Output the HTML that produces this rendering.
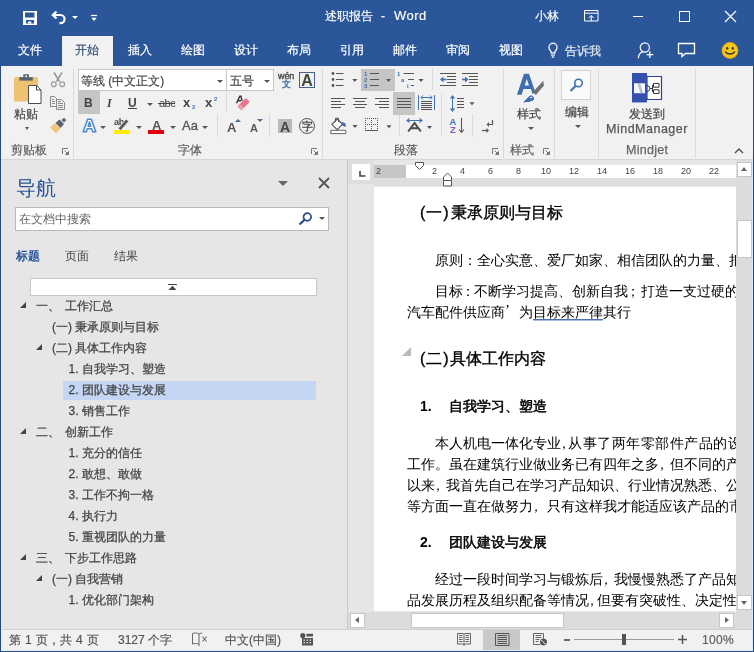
<!DOCTYPE html>
<html><head><meta charset="utf-8">
<style>
*{box-sizing:border-box;margin:0;padding:0}
html,body{width:754px;height:652px;overflow:hidden;-webkit-font-smoothing:antialiased;background:#2b579a;font-family:"Liberation Sans",sans-serif;color:#444;position:relative}
.a{position:absolute;will-change:transform}
svg{position:absolute;overflow:visible}
.w{color:#fff;font-size:12px;line-height:14px;white-space:nowrap;-webkit-text-stroke:0.15px #fff}
.tab{color:#fff;font-size:12px;line-height:14px;top:43px;white-space:nowrap;-webkit-text-stroke:0.2px currentColor}
.t{font-size:12px;line-height:14px;white-space:nowrap;color:#444;-webkit-text-stroke:0.2px #444}
.gl{font-size:12px;line-height:14px;white-space:nowrap;color:#5e5e5e;-webkit-text-stroke:0.2px #5e5e5e;margin-top:0.5px}
.sep{position:absolute;width:1px;background:#dadada}
.dd{position:absolute;width:0;height:0;border-left:3px solid transparent;border-right:3px solid transparent;border-top:3.5px solid #555;margin-left:-0.5px}
.nv{position:absolute;font-size:12px;line-height:14px;white-space:nowrap;color:#444;-webkit-text-stroke:0.25px #444}
.tri{position:absolute;width:0;height:0;border-left:6px solid transparent;border-bottom:6px solid #444}
.rn{position:absolute;font-size:9px;line-height:10px;color:#444;white-space:nowrap}
.d{position:absolute;font-size:14px;line-height:16px;white-space:nowrap;color:#000}
.hd{font-size:16px;line-height:18px;-webkit-text-stroke:0.35px #000}
</style></head><body>
<!-- ============ TITLE BAR ============ -->
<div class="a" style="left:0;top:0;width:754px;height:66px;background:#2b579a">
  <!-- save -->
  <svg style="left:23px;top:11px" width="14" height="14" viewBox="0 0 14 14">
    <path d="M0 0h14v14H0z" fill="#fff"/>
    <path d="M2 1.5h9.5v5H2zM3 9h8v3.5H3z" fill="#2b579a"/>
    <path d="M5 10.5h3.3v2H5z" fill="#fff"/>
  </svg>
  <!-- undo -->
  <svg style="left:51px;top:11px" width="16" height="14" viewBox="0 0 16 14">
    <path d="M2 4h7.5a4.1 4.1 0 0 1 0 8.2H8.5" fill="none" stroke="#fff" stroke-width="2.2"/>
    <path d="M5.5 .5L1.8 4l3.7 3.5" fill="none" stroke="#fff" stroke-width="2.2"/>
  </svg>
  <div class="dd" style="left:72px;top:16px;border-top-color:#fff;border-left-width:3px;border-right-width:3px"></div>
  <svg style="left:90px;top:14px" width="8" height="8" viewBox="0 0 8 8">
    <path d="M1 1.5h6" stroke="#fff" stroke-width="1.2"/>
    <path d="M1.3 3.8h5.4L4 7z" fill="#fff"/>
  </svg>
  <div class="a w" style="left:325px;top:9px">述职报告</div>
  <div class="a w" style="left:381px;top:9px">-</div>
  <div class="a w" style="left:394px;top:9px;font-size:13px;letter-spacing:0.5px">Word</div>
  <div class="a w" style="left:535px;top:9px">小林</div>
  <svg style="left:584px;top:10px" width="15" height="12" viewBox="0 0 15 12">
    <path d="M.5 .5h13.5v10.5H.5z" fill="none" stroke="#fff" stroke-width="1"/>
    <path d="M.5 3.2h13.5" stroke="#fff" stroke-width="1"/>
    <path d="M7.3 11V5.5M4.8 8l2.5-2.5L9.8 8" fill="none" stroke="#fff" stroke-width="1"/>
  </svg>
  <div class="a" style="left:633px;top:16px;width:10px;height:1px;background:#fff"></div>
  <div class="a" style="left:679px;top:11px;width:11px;height:11px;border:1px solid #fff"></div>
  <svg style="left:724px;top:10px" width="13" height="13" viewBox="0 0 13 13">
    <path d="M1 1l11 11M12 1L1 12" stroke="#fff" stroke-width="1.2"/>
  </svg>
  <!-- tabs -->
  <div class="a tab" style="left:18px">文件</div>
  <div class="a" style="left:62px;top:36px;width:51px;height:30px;background:#f1f1f1"></div>
  <div class="a tab" style="left:75px;color:#364f78">开始</div>
  <div class="a tab" style="left:128px">插入</div>
  <div class="a tab" style="left:181px">绘图</div>
  <div class="a tab" style="left:234px">设计</div>
  <div class="a tab" style="left:287px">布局</div>
  <div class="a tab" style="left:340px">引用</div>
  <div class="a tab" style="left:393px">邮件</div>
  <div class="a tab" style="left:446px">审阅</div>
  <div class="a tab" style="left:499px">视图</div>
  <svg style="left:548px;top:42px" width="10" height="16" viewBox="0 0 10 16">
    <path d="M3.2 11v-1.3C1.6 8.5 1 7.2 1 5.3a4 4 0 0 1 8 0c0 1.9-.6 3.2-2.2 4.4V11z" fill="none" stroke="#e8edf5" stroke-width="1.4"/>
    <path d="M3 13.2h4M3.8 15h2.4" stroke="#e8edf5" stroke-width="1.3"/>
  </svg>
  <div class="a tab" style="left:565px;top:43.5px;color:#dfe6f0">告诉我</div>
  <svg style="left:637px;top:42px" width="18" height="17" viewBox="0 0 18 17">
    <circle cx="7.8" cy="5.5" r="4.6" fill="none" stroke="#fff" stroke-width="1.2"/>
    <path d="M1.3 16.3c.3-3.5 2-5.8 4.8-6.6" fill="none" stroke="#fff" stroke-width="1.2"/>
    <path d="M12.8 9.2v6.8M9.5 12.6h6.8" stroke="#fff" stroke-width="1.3"/>
  </svg>
  <svg style="left:677px;top:42px" width="19" height="16" viewBox="0 0 19 16">
    <path d="M1.5 1.5h16v10h-9l-3.5 3v-3h-3.5z" fill="none" stroke="#fff" stroke-width="1.3"/>
  </svg>
  <svg style="left:721px;top:42px" width="18" height="17" viewBox="0 0 18 17">
    <circle cx="9" cy="8.5" r="8.2" fill="#f7c51c"/>
    <circle cx="9" cy="8.5" r="7.8" fill="none" stroke="#e0a800" stroke-width=".6"/>
    <ellipse cx="6.2" cy="6.2" rx="1.1" ry="1.5" fill="#3a3a3a"/>
    <ellipse cx="11.8" cy="6.2" rx="1.1" ry="1.5" fill="#3a3a3a"/>
    <path d="M4.3 9.5c1.5 3.3 7.9 3.3 9.4 0" fill="none" stroke="#3a3a3a" stroke-width="1.4"/>
  </svg>
</div>

<!-- ============ RIBBON ============ -->
<div class="a" style="left:1px;top:66px;width:752px;height:94px;background:#f1f1f1;border-bottom:1px solid #d6d6d6"></div>
<div id="rib">
  <!-- clipboard group -->
  <svg style="left:13px;top:73px" width="31" height="32" viewBox="0 0 31 32">
    <path d="M1 6a2 2 0 0 1 2-2h20a2 2 0 0 1 2 2v22.5H1z" fill="#efc173"/>
    <path d="M6.3 4.2h13.5v3.4H6.3z" fill="#56616b"/>
    <path d="M10.3 1.2h5.6v3.2h-5.6z" fill="#56616b"/>
    <circle cx="13.1" cy="3.3" r="1" fill="#f1f1f1"/>
    <path d="M15.5 12.5h8l4.5 4.5v13.5h-12.5z" fill="#fff" stroke="#4d4d4d" stroke-width="1"/>
    <path d="M23.5 12.5v4.5h4.5" fill="none" stroke="#4d4d4d" stroke-width="1"/>
  </svg>
  <div class="a t" style="left:14px;top:107px">粘贴</div>
  <div class="dd" style="left:25.5px;top:126.5px;border-left-width:2.5px;border-right-width:2.5px;border-top-width:3px"></div>
  <svg style="left:50px;top:71px" width="16" height="17" viewBox="0 0 16 17">
    <path d="M4 1.5l5.5 9M12 1.5L6.5 10.5" stroke="#9a9a9a" stroke-width="1.6" fill="none"/>
    <circle cx="3.8" cy="13.3" r="2.4" fill="none" stroke="#9a9a9a" stroke-width="1.2"/>
    <circle cx="12.2" cy="13.3" r="2.4" fill="none" stroke="#9a9a9a" stroke-width="1.2"/>
  </svg>
  <svg style="left:50px;top:95px" width="16" height="16" viewBox="0 0 16 16">
    <path d="M.5 1.5h4l2 2v8h-6z" fill="none" stroke="#8a8a8a" stroke-width="1"/>
    <path d="M6.5 4.5h5l3 3v7h-8z" fill="#f1f1f1" stroke="#8a8a8a" stroke-width="1"/>
    <path d="M2 4.5h2M2 6.5h3M2 8.5h3M8 8.5h5M8 10.5h5M8 12.5h5M8 6.5h3" stroke="#8a8a8a" stroke-width="1"/>
  </svg>
  <svg style="left:50px;top:117px" width="17" height="17" viewBox="0 0 17 17">
    <path d="M0 10.5l5-4.5 5.5 5.5-4.5 5z" fill="#f0c67a"/>
    <path d="M5.5 6l4-3.5 4.5 4.5-3.5 4z" fill="#5a6470"/>
    <path d="M11.5 3l2.5-2.3 2.3 2.3-2.3 2.5z" fill="#5a6470"/>
  </svg>
  <div class="a gl" style="left:11px;top:142px">剪贴板</div>
  <svg style="left:62px;top:148px" width="7" height="7" viewBox="0 0 7 7">
    <path d="M.5 6V.5H6" fill="none" stroke="#777" stroke-width="1"/>
    <path d="M2.5 2.5l4 4M6.5 3.5v3h-3z" stroke="#777" stroke-width="1" fill="#777"/>
  </svg>
  <div class="sep" style="left:73px;top:69px;height:89px"></div>

  <!-- font group -->
  <div class="a" style="left:78px;top:69px;width:149px;height:22px;background:#fff;border:1px solid #c6c6c6"></div>
  <div class="a t" style="left:80.5px;top:74px">等线 (中文正文)</div>
  <div class="dd" style="left:217px;top:79.5px"></div>
  <div class="a" style="left:226px;top:69px;width:48px;height:22px;background:#fff;border:1px solid #c6c6c6"></div>
  <div class="a t" style="left:229.5px;top:74px">五号</div>
  <div class="dd" style="left:264px;top:79.5px"></div>
  <div class="a" style="left:278px;top:70.5px;font-size:9px;line-height:10px;color:#444;letter-spacing:-0.1px;-webkit-text-stroke:0.35px #444">wén</div>
  <div class="a" style="left:281.5px;top:79px;font-size:8.5px;line-height:10px;color:#4a6fa0;-webkit-text-stroke:0.4px #4a6fa0">文</div>
  <div class="a" style="left:299px;top:72px;width:16px;height:16px;border:1px solid #46628c"></div>
  <div class="a" style="left:299px;top:71.5px;font-size:16px;line-height:17px;color:#444;width:16px;text-align:center;font-weight:bold">A</div>

  <div class="a" style="left:78px;top:91px;width:22px;height:23px;background:#c5c5c5"></div>
  <div class="a" style="left:84px;top:96px;font-size:12px;line-height:14px;color:#444;font-weight:bold">B</div>
  <div class="a" style="left:107px;top:96px;font-size:12px;line-height:14px;color:#444;font-style:italic;font-family:'Liberation Serif',serif;font-weight:bold">I</div>
  <div class="a" style="left:128px;top:95.5px;font-size:12px;line-height:14px;color:#444;font-weight:bold">U</div>
  <div class="a" style="left:128px;top:108px;width:9px;height:1px;background:#444"></div>
  <div class="dd" style="left:147px;top:102.5px"></div>
  <div class="a" style="left:158.5px;top:97px;font-size:11px;line-height:12px;color:#444;letter-spacing:-0.5px">abc</div>
  <div class="a" style="left:158px;top:103px;width:17px;height:1px;background:#444"></div>
  <div class="a" style="left:183px;top:97px;font-size:13px;line-height:12px;color:#444;font-weight:bold">x</div>
  <div class="a" style="left:191.5px;top:104px;font-size:6px;line-height:6px;color:#3f73b5;font-weight:bold">2</div>
  <div class="a" style="left:205px;top:97px;font-size:13px;line-height:12px;color:#444;font-weight:bold">x</div>
  <div class="a" style="left:213.5px;top:96px;font-size:6px;line-height:6px;color:#3f73b5;font-weight:bold">2</div>
  <div class="sep" style="left:226px;top:92px;height:20px"></div>
  <svg style="left:235px;top:95px" width="16" height="16" viewBox="0 0 16 16">
    <path d="M1.5 8.3L4.8 1.3h1.2l1 4.5M3 5.8h3" fill="none" stroke="#3a3a3a" stroke-width="1.5"/>
    <g transform="translate(8.6 9.2) rotate(-45)">
      <rect x="-6" y="-2.8" width="12" height="5.6" rx="1.2" fill="#ec738c"/>
      <rect x="-6" y="-2.8" width="3.5" height="5.6" rx="1" fill="#e9a2b4"/>
    </g>
  </svg>

  <svg style="left:82px;top:118px" width="15" height="15" viewBox="0 0 15 15">
    <path d="M1.3 13.7L5.8 1.3h3.4l4.5 12.4h-2.9l-1-3H5.2l-1 3zM6 8.3h3L7.5 3.8z" fill="#fff" stroke="#b9d3ee" stroke-width="2.6" stroke-linejoin="round"/>
    <path d="M1.3 13.7L5.8 1.3h3.4l4.5 12.4h-2.9l-1-3H5.2l-1 3zM6 8.3h3L7.5 3.8z" fill="#fff" stroke="#4a86c5" stroke-width="1.3" stroke-linejoin="round"/>
  </svg>
  <div class="dd" style="left:100.5px;top:125.5px"></div>
  <div class="a" style="left:113.5px;top:117.5px;font-size:9px;line-height:9px;color:#444;font-weight:bold;letter-spacing:-0.3px">ab</div>
  <svg style="left:117px;top:118px" width="14" height="13" viewBox="0 0 14 13">
    <path d="M1 10.5l8-9.5 2.8 2.3-8 9.2z" fill="#5a5a5a" stroke="#f1f1f1" stroke-width=".8"/>
  </svg>
  <div class="a" style="left:114px;top:130px;width:16px;height:4px;background:#ffee00"></div>
  <div class="dd" style="left:136px;top:125.5px"></div>
  <div class="a" style="left:151.5px;top:118.5px;font-size:13px;line-height:13px;color:#555;font-weight:bold">A</div>
  <div class="a" style="left:148px;top:130px;width:16px;height:4px;background:#e2000c"></div>
  <div class="dd" style="left:170px;top:125.5px"></div>
  <div class="a" style="left:182px;top:119px;font-size:13px;line-height:13px;color:#555;-webkit-text-stroke:0.3px #555">Aa</div>
  <div class="dd" style="left:202.5px;top:125.5px"></div>
  <div class="sep" style="left:217px;top:114px;height:23px"></div>
  <div class="a" style="left:227px;top:120.5px;font-size:13px;line-height:13px;color:#555;font-weight:bold">A</div>
  <div class="a" style="left:234.5px;top:119px;width:0;height:0;border-left:3px solid transparent;border-right:3px solid transparent;border-bottom:3.5px solid #4d6b8f"></div>
  <div class="a" style="left:250px;top:123px;font-size:11px;line-height:11px;color:#555;font-weight:bold">A</div>
  <div class="a" style="left:256.5px;top:119px;width:0;height:0;border-left:3px solid transparent;border-right:3px solid transparent;border-top:3.5px solid #4d6b8f"></div>
  <div class="sep" style="left:269px;top:114px;height:23px"></div>
  <div class="a" style="left:278px;top:119px;width:14px;height:14px;background:#b9b9b9"></div>
  <div class="a" style="left:278px;top:119.5px;width:14px;font-size:14px;line-height:14px;color:#444;text-align:center;font-weight:bold">A</div>
  <div class="a" style="left:299px;top:118px;width:16px;height:16px;border:1px solid #555;border-radius:50%"></div>
  <div class="a" style="left:301.5px;top:120px;font-size:10.5px;line-height:12px;color:#444;-webkit-text-stroke:0.35px #444">字</div>
  <div class="a gl" style="left:178px;top:142px">字体</div>
  <svg style="left:311px;top:148px" width="7" height="7" viewBox="0 0 7 7">
    <path d="M.5 6V.5H6" fill="none" stroke="#777" stroke-width="1"/>
    <path d="M2.5 2.5l4 4M6.5 3.5v3h-3z" stroke="#777" stroke-width="1" fill="#777"/>
  </svg>
  <div class="sep" style="left:322px;top:69px;height:89px"></div>

  <!-- paragraph group -->
  <svg style="left:331px;top:72px" width="28" height="16" viewBox="0 0 28 16">
    <circle cx="2" cy="1.5" r="1.4" fill="#555"/><circle cx="2" cy="7.5" r="1.4" fill="#555"/><circle cx="2" cy="13.5" r="1.4" fill="#555"/>
    <path d="M5 1.5h7.5M5 7.5h7.5M5 13.5h7.5" stroke="#555" stroke-width="1.2"/>
    <path d="M21.3 7h5l-2.5 3z" fill="#555"/>
  </svg>
  <div class="a" style="left:361px;top:69px;width:34px;height:22px;background:#c5c5c5"></div>
  <svg style="left:364px;top:71px" width="28" height="17" viewBox="0 0 28 17">
    <text x="0" y="5" font-size="6" fill="#3f73b5" font-family="Liberation Sans" font-weight="bold">1</text>
    <text x="0" y="10.8" font-size="6" fill="#3f73b5" font-family="Liberation Sans" font-weight="bold">2</text>
    <text x="0" y="16.5" font-size="6" fill="#3f73b5" font-family="Liberation Sans" font-weight="bold">3</text>
    <path d="M6 2.5h9M6 8.5h9M6 14.5h9" stroke="#555" stroke-width="1.2"/>
    <path d="M22 8h5l-2.5 3z" fill="#555"/>
  </svg>
  <svg style="left:397px;top:71px" width="28" height="17" viewBox="0 0 28 17">
    <text x="0" y="5" font-size="6" fill="#3f73b5" font-family="Liberation Sans" font-weight="bold">1</text>
    <text x="4" y="10.8" font-size="6" fill="#3f73b5" font-family="Liberation Sans" font-weight="bold">a</text>
    <text x="10" y="16.5" font-size="6" fill="#3f73b5" font-family="Liberation Sans" font-weight="bold">i</text>
    <path d="M6.5 2.5h10.5M11 8.5h6M14 14.5h3" stroke="#555" stroke-width="1.2"/>
    <path d="M21.5 8h5l-2.5 3z" fill="#555"/>
  </svg>
  <div class="sep" style="left:432px;top:68px;height:22px"></div>
  <svg style="left:440px;top:72px" width="17" height="15" viewBox="0 0 17 15">
    <path d="M0 1.5h16M7 4.5h9M7 7.5h9M7 10.5h9M0 13.5h16" stroke="#555" stroke-width="1"/>
    <path d="M2.5 7.5h4" stroke="#3f73b5" stroke-width="1.6"/><path d="M0 7.5l3.5-3v6z" fill="#3f73b5"/>
  </svg>
  <svg style="left:462px;top:72px" width="17" height="15" viewBox="0 0 17 15">
    <path d="M0 1.5h16M7 4.5h9M7 7.5h9M7 10.5h9M0 13.5h16" stroke="#555" stroke-width="1"/>
    <path d="M0 7.5h4" stroke="#3f73b5" stroke-width="1.6"/><path d="M6.5 7.5l-3.5-3v6z" fill="#3f73b5"/>
  </svg>

  <svg style="left:331px;top:97px" width="15" height="12" viewBox="0 0 15 12">
    <path d="M0 1.5h14M0 4.5h10M0 7.5h14M0 10.5h10" stroke="#555" stroke-width="1"/>
  </svg>
  <svg style="left:353px;top:97px" width="15" height="12" viewBox="0 0 15 12">
    <path d="M0 1.5h14M2 4.5h10M0 7.5h14M2 10.5h10" stroke="#555" stroke-width="1"/>
  </svg>
  <svg style="left:375px;top:97px" width="15" height="12" viewBox="0 0 15 12">
    <path d="M0 1.5h14M4 4.5h10M0 7.5h14M4 10.5h10" stroke="#555" stroke-width="1"/>
  </svg>
  <div class="a" style="left:393px;top:92px;width:22px;height:23px;background:#c5c5c5"></div>
  <svg style="left:397px;top:97px" width="15" height="12" viewBox="0 0 15 12">
    <path d="M0 1.5h14M0 4.5h14M0 7.5h14M0 10.5h14" stroke="#555" stroke-width="1"/>
  </svg>
  <svg style="left:418px;top:94px" width="17" height="17" viewBox="0 0 17 17">
    <path d="M.5 1v15M16.5 1v15" stroke="#3f73b5" stroke-width="1"/>
    <path d="M3 3.5h11M5 1.5L3 3.5l2 2M12 1.5l2 2-2 2" fill="none" stroke="#3f73b5" stroke-width="1"/>
    <path d="M3 7.5h11M3 9.5h11M3 11.5h11M3 13.5h11M3 15.5h11" stroke="#555" stroke-width="1"/>
  </svg>
  <div class="sep" style="left:441px;top:93px;height:43px"></div>
  <svg style="left:449px;top:95px" width="27" height="17" viewBox="0 0 27 17">
    <path d="M3.5 2.5v12" stroke="#3f73b5" stroke-width="1"/>
    <path d="M3.5 0L.8 3.5h5.4zM3.5 17L.8 13.5h5.4z" fill="#3f73b5"/>
    <path d="M8 3.5h7M8 6.5h7M8 9.5h7M8 12.5h7" stroke="#555" stroke-width="1"/>
    <path d="M20.5 7.3h5l-2.5 3z" fill="#555"/>
  </svg>
  <svg style="left:330px;top:117px" width="28" height="18" viewBox="0 0 28 18">
    <path d="M.8 13.3h15v3.3h-15z" fill="#fff" stroke="#666" stroke-width="1"/>
    <path d="M12 4.8l3.6 1.6.3 3.6-3.5-1.2z" fill="#3f73b5"/>
    <path d="M7.2 2L12.5 7.3 7.2 12.6 1.9 7.3z" fill="#fff" stroke="#555" stroke-width="1.1"/>
    <path d="M5.5 5V1.2h3V5" fill="none" stroke="#555" stroke-width="1"/>
    <path d="M22.5 8h5l-2.5 3z" fill="#555"/>
  </svg>
  <svg style="left:365px;top:118px" width="27" height="14" viewBox="0 0 27 14">
    <path d="M0 0h1v1h-1zM0 2h1v1h-1zM0 4h1v1h-1zM0 6h1v1h-1zM0 8h1v1h-1zM0 10h1v1h-1zM0 12h1v1h-1zM2 0h1v1h-1zM2 6h1v1h-1zM4 0h1v1h-1zM4 6h1v1h-1zM6 0h1v1h-1zM6 2h1v1h-1zM6 4h1v1h-1zM6 6h1v1h-1zM6 8h1v1h-1zM6 10h1v1h-1zM6 12h1v1h-1zM8 0h1v1h-1zM8 6h1v1h-1zM10 0h1v1h-1zM10 6h1v1h-1zM12 0h1v1h-1zM12 2h1v1h-1zM12 4h1v1h-1zM12 6h1v1h-1zM12 8h1v1h-1zM12 10h1v1h-1zM12 12h1v1h-1z" fill="#555"/>
    <path d="M0 12.5h13" stroke="#555" stroke-width="1"/>
    <path d="M21.5 7.3h5l-2.5 3z" fill="#555"/>
  </svg>
  <div class="sep" style="left:399px;top:115px;height:21px"></div>
  <svg style="left:406px;top:118px" width="27" height="15" viewBox="0 0 27 15">
    <path d="M2.2 13.5L8.5 5l6.3 8.5M4.8 10.3h7.4" fill="none" stroke="#4a4a4a" stroke-width="2"/>
    <path d="M1 2.5h15M3.5 .5L1 2.5l2.5 2M13.5 .5L16 2.5l-2.5 2" fill="none" stroke="#3f73b5" stroke-width="1.1"/>
    <path d="M21 8h5l-2.5 3z" fill="#555"/>
  </svg>
  <svg style="left:450px;top:117px" width="15" height="17" viewBox="0 0 15 17">
    <text x="-0.5" y="8" font-size="9.5" fill="#3f73b5" font-family="Liberation Sans" font-weight="bold">A</text>
    <text x="0" y="16" font-size="9.5" fill="#8b5bb0" font-family="Liberation Sans" font-weight="bold">Z</text>
    <path d="M11.5 1v14.5M9 12.5l2.5 3 2.5-3" fill="none" stroke="#555" stroke-width="1.1"/>
  </svg>
  <div class="sep" style="left:472px;top:114px;height:23px"></div>
  <svg style="left:482px;top:119px" width="12" height="15" viewBox="0 0 12 15">
    <path d="M10.5 1v4.5H5.5" fill="none" stroke="#555" stroke-width="1.2"/>
    <path d="M4.5 5.5L7 3v5z" fill="#555"/>
    <path d="M0 11.5h5" fill="none" stroke="#555" stroke-width="1.2"/>
    <path d="M7 11.5L4.5 9v5z" fill="#555"/>
  </svg>
  <div class="a gl" style="left:393.5px;top:142px">段落</div>
  <svg style="left:492px;top:148px" width="7" height="7" viewBox="0 0 7 7">
    <path d="M.5 6V.5H6" fill="none" stroke="#777" stroke-width="1"/>
    <path d="M2.5 2.5l4 4M6.5 3.5v3h-3z" stroke="#777" stroke-width="1" fill="#777"/>
  </svg>
  <div class="sep" style="left:503px;top:69px;height:89px"></div>

  <!-- styles group -->
  <svg style="left:516px;top:73px" width="29" height="31" viewBox="0 0 29 31">
    <path d="M1 21.7L8 .8h5l6 17.5-2.3 3.2-1.7-5.5H7.4l-1.8 5.7zM8.7 12.5h4.3L10.8 5.8z" fill="#3f6eb0"/>
    <path d="M27.3 7.8l.6 4.6-8 9.5-3-2.8z" fill="#707070"/>
    <path d="M5.5 30l7.3-7.3a3.7 3.7 0 0 1 5.6 4.6Q14 30.5 5.5 30z" fill="#3f6eb0" stroke="#fff" stroke-width="1.1"/>
    <path d="M13.8 25.2a2 2 0 0 1 2.6-.8" fill="none" stroke="#fff" stroke-width="1"/>
  </svg>
  <div class="a t" style="left:517px;top:106.5px">样式</div>
  <div class="dd" style="left:528px;top:127px"></div>
  <div class="a gl" style="left:509.5px;top:142px">样式</div>
  <svg style="left:543px;top:148px" width="7" height="7" viewBox="0 0 7 7">
    <path d="M.5 6V.5H6" fill="none" stroke="#777" stroke-width="1"/>
    <path d="M2.5 2.5l4 4M6.5 3.5v3h-3z" stroke="#777" stroke-width="1" fill="#777"/>
  </svg>
  <div class="sep" style="left:554px;top:69px;height:89px"></div>

  <!-- editing -->
  <div class="a" style="left:561px;top:70px;width:30px;height:30px;background:#fafafa;border:1px solid #d2d2d2"></div>
  <svg style="left:569px;top:78px" width="15" height="14" viewBox="0 0 15 14">
    <circle cx="9.5" cy="5" r="3.8" fill="none" stroke="#3f73b5" stroke-width="1.6"/>
    <path d="M6.8 7.7L1.5 13" stroke="#3f73b5" stroke-width="2.2"/>
  </svg>
  <div class="a t" style="left:565px;top:104.5px">编辑</div>
  <div class="dd" style="left:575.5px;top:125px"></div>
  <div class="sep" style="left:598px;top:69px;height:89px"></div>

  <!-- mindjet -->
  <svg style="left:632px;top:73px" width="30" height="30" viewBox="0 0 30 30">
    <path d="M15 3.5h14.5v23H15z" fill="#fff" stroke="#2e3f9a" stroke-width="1.2"/>
    <path d="M0 0h15v29.4H0z" fill="#3551b0"/>
    <path d="M2 10.3h11v9.9H2z" fill="#f4f6fb"/>
    <path d="M5.5 10.3h2.5l3 9.9H8.5z" fill="#b8bcc8"/>
    <path d="M15 12.6a2.9 2.9 0 0 1 0 5.8" fill="none" stroke="#333" stroke-width="1"/>
    <path d="M17.9 15.5h2.1M20.5 12.3v6.4M20.5 12.3h1.2M20.5 18.7h1.2" fill="none" stroke="#333" stroke-width="1"/>
    <path d="M21.5 10.5h5.5v3.7h-5.5zM21.5 16.8h5.5v3.7h-5.5z" fill="#fff" stroke="#333" stroke-width="1"/>
  </svg>
  <div class="a t" style="left:629px;top:106.5px">发送到</div>
  <div class="a" style="left:606px;top:122px;font-size:12.5px;line-height:14px;color:#555;white-space:nowrap;letter-spacing:0.5px;-webkit-text-stroke:0.25px #555">MindManager</div>
  <div class="a" style="left:626px;top:142.5px;font-size:12.5px;line-height:14px;color:#666;white-space:nowrap;letter-spacing:0.3px;-webkit-text-stroke:0.25px #666">Mindjet</div>
  <div class="sep" style="left:695px;top:69px;height:89px"></div>
  <svg style="left:734px;top:148px" width="10" height="6" viewBox="0 0 10 6">
    <path d="M1 5l4-4 4 4" fill="none" stroke="#555" stroke-width="1.5"/>
  </svg>
</div>

<!-- ============ NAV PANE ============ -->
<div class="a" style="left:1px;top:160px;width:346px;height:469px;background:#e6e6e6"></div>
<div id="nav">
  <div class="a" style="left:16px;top:176px;font-size:20px;line-height:24px;color:#2b579a;white-space:nowrap">导航</div>
  <div class="a" style="left:278px;top:181px;width:0;height:0;border-left:5px solid transparent;border-right:5px solid transparent;border-top:5.5px solid #666"></div>
  <svg style="left:318px;top:177px" width="12" height="12" viewBox="0 0 12 12">
    <path d="M1 1l10 10M11 1L1 11" stroke="#555" stroke-width="1.8"/>
  </svg>
  <div class="a" style="left:15px;top:207px;width:314px;height:24px;background:#fff;border:1px solid #b9b9b9"></div>
  <div class="a" style="left:18.5px;top:212px;font-size:12px;line-height:14px;color:#666;white-space:nowrap">在文档中搜索</div>
  <svg style="left:298px;top:212px" width="15" height="13" viewBox="0 0 15 13">
    <circle cx="9.3" cy="5" r="3.8" fill="none" stroke="#2a4a88" stroke-width="1.7"/>
    <path d="M6.5 7.8L1.5 12.5" stroke="#2a4a88" stroke-width="2.2"/>
  </svg>
  <div class="dd" style="left:319px;top:217px"></div>
  <div class="a" style="left:16px;top:249px;font-size:12px;line-height:14px;color:#2b579a;font-weight:bold;white-space:nowrap">标题</div>
  <div class="a" style="left:65px;top:249px;font-size:12px;line-height:14px;color:#444;white-space:nowrap">页面</div>
  <div class="a" style="left:114px;top:249px;font-size:12px;line-height:14px;color:#444;white-space:nowrap">结果</div>
  <div class="a" style="left:30px;top:278px;width:287px;height:18px;background:#fff;border:1px solid #c6c6c6"></div>
  <svg style="left:168px;top:284px" width="9" height="6" viewBox="0 0 9 6">
    <path d="M0 .5h9" stroke="#444" stroke-width="1"/>
    <path d="M0.5 6l4-4.3 4 4.3z" fill="#444"/>
  </svg>

  <div class="tri" style="left:20px;top:302px"></div>
  <div class="nv" style="left:36px;top:299px">一、</div><div class="nv" style="left:64.5px;top:299px">工作汇总</div>
  <div class="nv" style="left:52px;top:320px">(一) 秉承原则与目标</div>
  <div class="tri" style="left:36px;top:344px"></div>
  <div class="nv" style="left:52px;top:341px">(二) 具体工作内容</div>
  <div class="nv" style="left:68.5px;top:362px">1. 自我学习、塑造</div>
  <div class="a" style="left:63px;top:381px;width:253px;height:19px;background:#c4d6f3"></div>
  <div class="nv" style="left:68.5px;top:383px">2. 团队建设与发展</div>
  <div class="nv" style="left:68.5px;top:404px">3. 销售工作</div>
  <div class="tri" style="left:20px;top:428px"></div>
  <div class="nv" style="left:36px;top:425px">二、</div><div class="nv" style="left:64.5px;top:425px">创新工作</div>
  <div class="nv" style="left:68.5px;top:446px">1. 充分的信任</div>
  <div class="nv" style="left:68.5px;top:467px">2. 敢想、敢做</div>
  <div class="nv" style="left:68.5px;top:488px">3. 工作不拘一格</div>
  <div class="nv" style="left:68.5px;top:509px">4. 执行力</div>
  <div class="nv" style="left:68.5px;top:530px">5. 重视团队的力量</div>
  <div class="tri" style="left:20px;top:554px"></div>
  <div class="nv" style="left:36px;top:551px">三、</div><div class="nv" style="left:64.5px;top:551px">下步工作思路</div>
  <div class="tri" style="left:36px;top:575px"></div>
  <div class="nv" style="left:52px;top:572px">(一) 自我营销</div>
  <div class="nv" style="left:68.5px;top:593px">1. 优化部门架构</div>
</div>

<!-- ============ DOCUMENT ============ -->
<div class="a" style="left:347px;top:160px;width:406px;height:469px;background:#e6e6e6;border-left:1px solid #c8c8c8"></div>
<div id="doc">
  <!-- tab selector column -->
  <div class="a" style="left:348px;top:160px;width:26px;height:24px;background:#dedede"></div>
  <div class="a" style="left:352px;top:164px;width:18px;height:16px;background:#fff"></div>
  <svg style="left:359px;top:170.5px" width="7" height="6" viewBox="0 0 7 6">
    <path d="M1 0v5h5.5" fill="none" stroke="#444" stroke-width="1.6"/>
  </svg>
  <!-- ruler -->
  <div class="a" style="left:374px;top:165px;width:362px;height:13px;background:#fff"></div>
  <div class="a" style="left:374px;top:165px;width:32px;height:13px;background:#c6c6c6"></div>
  <div class="a" style="left:374px;top:178px;width:362px;height:8px;background:#dedede"></div>
  <div class="rn" style="left:376px;top:166px">2</div>
  <div class="rn" style="left:432px;top:166px">2</div>
  <div class="rn" style="left:460px;top:166px">4</div>
  <div class="rn" style="left:488px;top:166px">6</div>
  <div class="rn" style="left:516px;top:166px">8</div>
  <div class="rn" style="left:541px;top:166px">10</div>
  <div class="rn" style="left:569px;top:166px">12</div>
  <div class="rn" style="left:597px;top:166px">14</div>
  <div class="rn" style="left:625px;top:166px">16</div>
  <div class="rn" style="left:653px;top:166px">18</div>
  <div class="rn" style="left:681px;top:166px">20</div>
  <div class="rn" style="left:709px;top:166px">22</div>
  <svg style="left:414px;top:162px" width="11" height="9" viewBox="0 0 11 9">
    <path d="M1.5 .5h8v3L5.5 7.5 1.5 3.5z" fill="#fff" stroke="#555" stroke-width="1"/>
  </svg>
  <svg style="left:442px;top:172px" width="11" height="15" viewBox="0 0 11 15">
    <path d="M1.5 5L5.5 1 9.5 5v3.5h-8z" fill="#fff" stroke="#555" stroke-width="1"/>
    <path d="M1.5 8.5h8v5.5h-8z" fill="#fff" stroke="#555" stroke-width="1"/>
  </svg>
  <!-- page -->
  <div class="a" style="left:374px;top:187px;width:362px;height:424px;background:#fff;overflow:hidden">
    <div class="d hd" style="left:46px;top:17px;letter-spacing:1px">(一)</div><div class="d hd" style="left:76.5px;top:17px">秉承原则与目标</div>
    <div class="d" style="left:61px;top:65px">原则：全心实意、爱厂如家、相信团队的力量、把</div>
    <div class="d" style="left:61px;top:96px">目标<span style="display:inline-block;width:11px"><span style="position:relative;left:-2px">：</span></span>不断学习提高、创新自我<span style="display:inline-block;width:13px"><span style="position:relative;left:-2px">；</span></span>打造一支过硬的</div>
    <div class="d" style="left:33px;top:117px">汽车配件供应商<span style="display:inline-block;width:14px"></span>为目标来严律其行</div>
    <div class="d" style="left:131px;top:115px;font-family:'Liberation Serif',serif;font-size:15px">’</div>
    <div class="a" style="left:159px;top:132px;width:70px;height:1px;background:#4f6fb5"></div><div class="a" style="left:159px;top:133px;width:70px;height:1px;background:#a9bde0"></div>
    <svg style="left:28px;top:160px" width="10" height="9" viewBox="0 0 10 9"><path d="M9 0v9H0z" fill="#b8b8b8"/></svg>
    <div class="d hd" style="left:46px;top:163px;letter-spacing:1px">(二)</div><div class="d hd" style="left:76px;top:163px">具体工作内容</div>
    <div class="d" style="left:46px;top:211px;font-weight:bold">1.</div>
    <div class="d" style="left:75px;top:211px;-webkit-text-stroke:0.5px #000">自我学习、塑造</div>
    <div class="d" style="left:60.5px;top:248px">本人机电一体化专业<span style="display:inline-block;width:7.5px"><span style="position:relative;left:-4px">，</span></span><span style="letter-spacing:0.5px">从事了两年零部件产品的设</span></div>
    <div class="d" style="left:33px;top:269px">工作。虽在建筑行业做业务已有四年之多<span style="display:inline-block;width:10.5px"><span style="position:relative;left:-4px">，</span></span>但不同的产</div>
    <div class="d" style="left:33px;top:290px">以来<span style="display:inline-block;width:11.3px"><span style="position:relative;left:-4px">，</span></span>我首先自己在学习产品知识、行业情况熟悉、公</div>
    <div class="d" style="left:33px;top:311px">等方面一直在做努力<span style="display:inline-block;width:14px"><span style="position:relative;left:-4px">，</span></span>只有这样我才能适应该产品的市</div>
    <div class="d" style="left:46px;top:346.5px;font-weight:bold">2.</div>
    <div class="d" style="left:75px;top:346.5px;-webkit-text-stroke:0.5px #000">团队建设与发展</div>
    <div class="d" style="left:60.5px;top:383.5px">经过一段时间学习与锻炼后<span style="display:inline-block;width:11.5px"><span style="position:relative;left:-4px">，</span></span>我慢慢熟悉了产品知</div>
    <div class="d" style="left:33px;top:404.5px">品发展历程及组织配备等情况<span style="display:inline-block;width:7.5px"><span style="position:relative;left:-4px">，</span></span>但要有突破性、决定性</div>
  </div>
  <!-- vertical scrollbar -->
  <div class="a" style="left:736px;top:160px;width:16px;height:452px;background:#dcdcdc"></div>
  <div class="a" style="left:737px;top:162px;width:15px;height:15px;background:#fff;border:1px solid #c6c6c6"></div>
  <div class="a" style="left:741px;top:167px;width:0;height:0;border-left:3.5px solid transparent;border-right:3.5px solid transparent;border-bottom:4px solid #666"></div>
  <div class="a" style="left:737px;top:220px;width:15px;height:38px;background:#fff;border:1px solid #c6c6c6"></div>
  <div class="a" style="left:737px;top:595px;width:15px;height:15px;background:#fff;border:1px solid #c6c6c6"></div>
  <div class="a" style="left:741px;top:601px;width:0;height:0;border-left:3.5px solid transparent;border-right:3.5px solid transparent;border-top:4px solid #666"></div>
  <!-- horizontal scrollbar -->
  <div class="a" style="left:348px;top:612px;width:405px;height:17px;background:#dcdcdc"></div>
  <div class="a" style="left:350px;top:613px;width:15px;height:15px;background:#fff;border:1px solid #c6c6c6"></div>
  <div class="a" style="left:355px;top:617px;width:0;height:0;border-top:3.5px solid transparent;border-bottom:3.5px solid transparent;border-right:4px solid #666"></div>
  <div class="a" style="left:411px;top:613px;width:153px;height:15px;background:#fff;border:1px solid #c6c6c6"></div>
  <div class="a" style="left:719px;top:613px;width:15px;height:15px;background:#fff;border:1px solid #c6c6c6"></div>
  <div class="a" style="left:725px;top:617px;width:0;height:0;border-top:3.5px solid transparent;border-bottom:3.5px solid transparent;border-left:4px solid #666"></div>
</div>

<!-- ============ STATUS ============ -->
<div class="a" style="left:1px;top:629px;width:752px;height:22px;background:#f1f1f1;border-top:1px solid #cfcfcf"></div>
<div id="status">
  <div class="a" style="left:9px;top:633px;font-size:12px;line-height:14px;color:#555;white-space:nowrap;-webkit-text-stroke:0.2px #555;letter-spacing:0.3px">第 1 页，共 4 页</div>
  <div class="a" style="left:118px;top:633px;font-size:12px;line-height:14px;color:#555;white-space:nowrap;-webkit-text-stroke:0.2px #555">3127 个字</div>
  <svg style="left:192px;top:632px" width="16" height="14" viewBox="0 0 16 14">
    <path d="M.5 1.5c2.5-.8 4.5-.8 6.5.5v10.5c-2-1.3-4-1.3-6.5-.5z" fill="none" stroke="#666" stroke-width="1"/>
    <path d="M7 2c1-.6 2-.9 3-.9M7 12.5V14" fill="none" stroke="#666" stroke-width="1"/>
    <path d="M10.5 4.5l4 5M14.5 4.5l-4 5" stroke="#666" stroke-width="1.1"/>
  </svg>
  <div class="a" style="left:225px;top:633px;font-size:12px;line-height:14px;color:#555;white-space:nowrap;-webkit-text-stroke:0.2px #555">中文(中国)</div>
  <svg style="left:300px;top:633px" width="14" height="13" viewBox="0 0 14 13">
    <circle cx="2.8" cy="2.6" r="2.6" fill="#555"/>
    <path d="M6.5 .8h6.5v2.7H6.5zM2 5h11v7.5H2z" fill="#555"/>
    <path d="M3.5 6.5h1.5v1.2H3.5zM6.5 6.5h1.5v1.2H6.5zM9.5 6.5h1.5v1.2H9.5zM3.5 9h1.5v1.2H3.5zM6.5 9h1.5v1.2H6.5zM9.5 9h1.5v1.2H9.5z" fill="#e8e8e8"/>
  </svg>
  <svg style="left:457px;top:633px" width="14" height="13" viewBox="0 0 14 13">
    <path d="M.5 .5h6l.5.5.5-.5h6v10.5h-5.5l-1 1.5-1-1.5H.5z" fill="none" stroke="#666" stroke-width="1"/>
    <path d="M7 1v10.5" stroke="#666" stroke-width="1"/>
    <path d="M2 2.5h3.5M2 4.5h3.5M2 6.5h3.5M2 8.5h3.5M8.5 2.5h3.5M8.5 4.5h3.5M8.5 6.5h3.5M8.5 8.5h3.5" stroke="#666" stroke-width="1"/>
  </svg>
  <div class="a" style="left:483px;top:630px;width:37px;height:21px;background:#c8c8c8"></div>
  <svg style="left:495px;top:633px" width="15" height="13" viewBox="0 0 15 13">
    <path d="M.5 .5h13.5v12H.5z" fill="none" stroke="#555" stroke-width="1"/>
    <path d="M2.5 2.5h9.5M2.5 4.5h9.5M2.5 6.5h9.5M2.5 8.5h9.5M2.5 10.5h9.5" stroke="#555" stroke-width="1"/>
  </svg>
  <svg style="left:533px;top:633px" width="15" height="13" viewBox="0 0 15 13">
    <path d="M7 11.5H.5V.5h10v5" fill="none" stroke="#666" stroke-width="1"/>
    <path d="M2.5 2.5h6M2.5 4.5h6M2.5 6.5h4M2.5 8.5h3" stroke="#666" stroke-width="1"/>
    <circle cx="10.5" cy="9" r="3.5" fill="#555"/>
    <path d="M8 7.5c1.5 0 2 1 3 2.5s2 1 2.5.5" fill="none" stroke="#f1f1f1" stroke-width=".9"/>
  </svg>
  <div class="a" style="left:564px;top:639px;width:6px;height:1.5px;background:#666"></div>
  <div class="a" style="left:574px;top:639px;width:100px;height:1px;background:#999"></div>
  <div class="a" style="left:622px;top:634px;width:4px;height:11px;background:#555"></div>
  <svg style="left:678px;top:635px" width="9" height="9" viewBox="0 0 9 9">
    <path d="M4.5 0v9M0 4.5h9" stroke="#555" stroke-width="1.5"/>
  </svg>
  <div class="a" style="left:702px;top:633px;font-size:12px;line-height:14px;color:#606060;white-space:nowrap;letter-spacing:0.3px;-webkit-text-stroke:0.2px #606060">100%</div>
</div>
<!-- window border -->
<div class="a" style="left:0;top:66px;width:1px;height:586px;background:#2a4a78"></div>
<div class="a" style="left:753px;top:66px;width:1px;height:586px;background:#2a4a78"></div>
<div class="a" style="left:752px;top:160px;width:1px;height:491px;background:#dde9f8"></div>
<div class="a" style="left:1px;top:160px;width:1px;height:491px;background:#e3edf9"></div>
<div class="a" style="left:1px;top:650px;width:752px;height:1px;background:#e3edf9"></div>
<div class="a" style="left:0;top:651px;width:754px;height:1px;background:#2a4a78"></div>
</body></html>
